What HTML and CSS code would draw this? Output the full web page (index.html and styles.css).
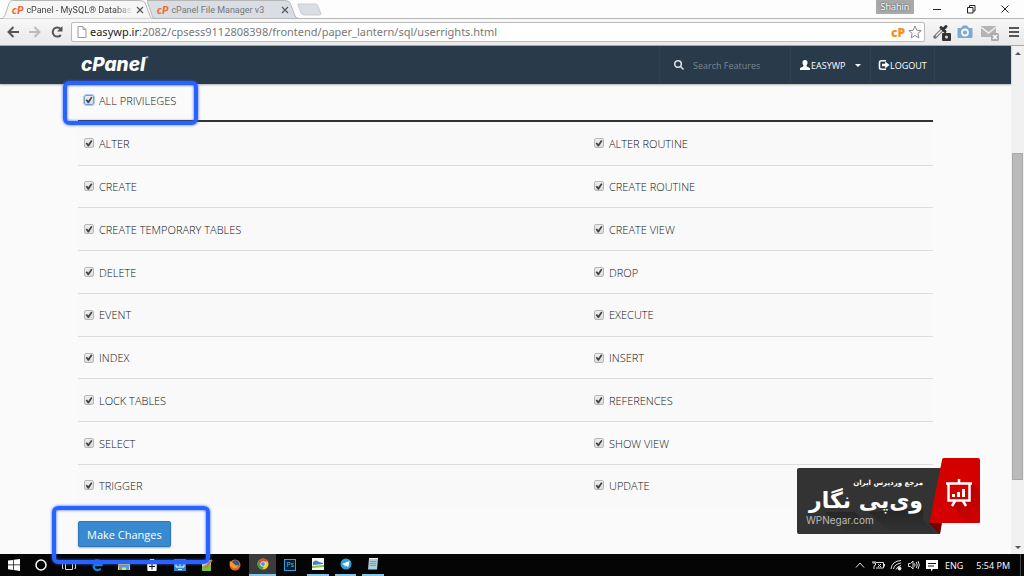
FILE: index.html
```html
<!DOCTYPE html>
<html lang="en">
<head>
  <meta charset="UTF-8">
  <title>cPanel - MySQL® Databases</title>
  <link rel="stylesheet" href="styles.css">
</head>
<body>
  <!-- browser tabs -->
  <div class="tab-strip">
    <div class="tab active">
      <svg class="tab-shape" viewBox="0 0 154 19" preserveAspectRatio="none"><path d="M0 18.5C4 18 6 2 9 1Q10 .5 12 .5H139Q144 .5 145 3L150 16Q151 18.5 154 18.5"/></svg>
      <span class="favicon">cP</span>
      <span class="tab-title">cPanel - MySQL® Databas</span>
      <button class="tab-close" aria-label="Close tab"><svg viewBox="0 0 8 8"><path d="M1 1L7 7M7 1L1 7"/></svg></button>
    </div>
    <div class="tab">
      <svg class="tab-shape" viewBox="0 0 154 19" preserveAspectRatio="none"><path d="M0 .5H139Q144 .5 145 3L150 16Q151 18.5 154 18.5H8Q6 18 5 15Z"/></svg>
      <span class="favicon">cP</span>
      <span class="tab-title">cPanel File Manager v3</span>
      <button class="tab-close" aria-label="Close tab"><svg viewBox="0 0 8 8"><path d="M1 1L7 7M7 1L1 7"/></svg></button>
    </div>
    <button class="new-tab" aria-label="New tab"><svg viewBox="0 0 25 13"><path d="M1 1H18Q20 1 21 3L24 11Q24 12 22 12H7Q5 12 4 10L1 2Z"/></svg></button>
    <div class="window-controls">
      <span class="profile">Shahin</span>
      <button aria-label="Minimize"><svg viewBox="0 0 10 10"><path d="M1 5.5H9"/></svg></button>
      <button aria-label="Restore"><svg viewBox="0 0 10 10"><path d="M1.500 3.500H7V9H1.500ZM3.500 3V1.500H9V7H7"/></svg></button>
      <button aria-label="Close"><svg viewBox="0 0 10 10"><path d="M1.500 1.500L8.500 8.500M8.500 1.500L1.500 8.500"/></svg></button>
    </div>
  </div>

  <div class="toolbar">
    <button aria-label="Back"><svg viewBox="0 0 14 14"><path class="stroke" d="M13 7H3M7.500 2L2.500 7L7.500 12"/></svg></button>
    <button class="disabled" aria-label="Forward"><svg viewBox="0 0 14 14"><path class="stroke" d="M1 7H11M6.500 2L11.500 7L6.500 12"/></svg></button>
    <button aria-label="Reload"><svg viewBox="0 0 14 14"><path class="stroke" d="M10.800 10A4.600 4.600 0 1 1 10.500 3.700"/><path class="fill" d="M12.500 1V6.500H7Z"/></svg></button>
    <div class="address">
      <svg class="page-icon" viewBox="0 0 10 12"><path d="M1 .5H6L9 3.500V11.500H1ZM6 .5V3.500H9"/></svg>
      <div class="url" role="textbox" aria-label="Address"><b>easywp.ir</b>:2082/cpsess9112808398/frontend/paper_lantern/sql/userrights.html</div>
      <span class="cp-key">cP</span>
      <svg class="star" viewBox="0 0 14 14"><path d="M7 1L8.800 5.200L13.200 5.600L9.900 8.500L10.900 12.900L7 10.500L3.100 12.900L4.100 8.500L.8 5.600L5.200 5.200Z"/></svg>
    </div>
    <div class="extensions">
      <button aria-label="Color picker"><svg viewBox="0 0 18 18"><path d="M2 14L9 7" stroke="#777" stroke-width="3.500" stroke-linecap="round"/><path d="M3 13L9 7" stroke="#eee" stroke-width="1.500"/><path d="M8 4.500L12 8.500M10 6.500L13 3.500" stroke="#333" stroke-width="3" stroke-linecap="round"/><rect x="9" y="10" width="9" height="8" rx="1" fill="#333"/><circle cx="13.500" cy="14" r="1.500" fill="#ddd"/></svg></button>
      <button aria-label="Screenshot"><svg viewBox="0 0 18 18"><path d="M2 5H5L7 2.500H11L13 5H16Q16.500 5 16.500 6V14Q16.500 15 15.500 15H2.500Q1.500 15 1.500 14V6Q1.500 5 2 5Z" fill="#7fa8cf"/><circle cx="9" cy="9.500" r="3" fill="none" stroke="#f2f6fa" stroke-width="1.800"/></svg></button>
      <button class="mail" aria-label="Mail"><svg viewBox="0 0 18 18"><rect x="0" y="3" width="15" height="11" fill="#b4b4b4"/><path d="M0 4L7.500 10L15 4" fill="none" stroke="#eee" stroke-width="1.500"/><rect x="10" y="10" width="8" height="8" rx="1.500" fill="#aaa"/><path d="M12 12L16 16M16 12L12 16" stroke="#fff" stroke-width="1.500"/></svg></button>
      <button class="menu" aria-label="Menu"><svg viewBox="0 0 18 18"><path d="M4 5H14M4 9H14M4 13H14" stroke="#555" stroke-width="2.200"/></svg></button>
    </div>
  </div>

  <div class="viewport">
    <div class="page">
      <header class="navbar">
        <a class="logo" href="#">cPanel<sup>®</sup></a>
        <nav>
          <label class="nav-item search">
            <svg viewBox="0 0 12 12"><circle cx="5" cy="5" r="3.300"/><path d="M7.500 7.500L10.500 10.500"/></svg>
            <input type="text" placeholder="Search Features" aria-label="Search Features">
          </label>
          <a class="nav-item user" href="#">
            <svg viewBox="0 0 12 12"><path d="M6 1C8 1 8.800 2.300 8.500 4.200C8.300 5.300 7.600 6 7.400 6.800C7.300 8 10 8.400 11 9.200V11H1V9.200C2 8.400 4.700 8 4.600 6.800C4.400 6 3.700 5.300 3.500 4.200C3.200 2.300 4 1 6 1Z"/></svg>
            EASYWP
            <span class="caret"></span>
          </a>
          <a class="nav-item logout" href="#">
            <svg viewBox="0 0 12 12"><path d="M8 1.800H3.500Q1.500 1.800 1.500 3.500V8.500Q1.500 10.200 3.500 10.200H8" fill="none" stroke="#fff" stroke-width="1.600"/><path d="M4 4.800H7.200V2.600L11.500 6L7.200 9.400V7.200H4Z"/></svg>
            LOGOUT
          </a>
        </nav>
      </header>

      <main>
        <table class="privileges">
          <thead>
            <tr><th colspan="2"><label class="all"><input type="checkbox" checked>ALL PRIVILEGES<span class="highlight"></span></label></th></tr>
          </thead>
          <tbody>
            <tr><td><label><input type="checkbox" checked>ALTER</label></td><td><label><input type="checkbox" checked>ALTER ROUTINE</label></td></tr>
            <tr><td><label><input type="checkbox" checked>CREATE</label></td><td><label><input type="checkbox" checked>CREATE ROUTINE</label></td></tr>
            <tr><td><label><input type="checkbox" checked>CREATE TEMPORARY TABLES</label></td><td><label><input type="checkbox" checked>CREATE VIEW</label></td></tr>
            <tr><td><label><input type="checkbox" checked>DELETE</label></td><td><label><input type="checkbox" checked>DROP</label></td></tr>
            <tr><td><label><input type="checkbox" checked>EVENT</label></td><td><label><input type="checkbox" checked>EXECUTE</label></td></tr>
            <tr><td><label><input type="checkbox" checked>INDEX</label></td><td><label><input type="checkbox" checked>INSERT</label></td></tr>
            <tr><td><label><input type="checkbox" checked>LOCK TABLES</label></td><td><label><input type="checkbox" checked>REFERENCES</label></td></tr>
            <tr><td><label><input type="checkbox" checked>SELECT</label></td><td><label><input type="checkbox" checked>SHOW VIEW</label></td></tr>
            <tr><td><label><input type="checkbox" checked>TRIGGER</label></td><td><label><input type="checkbox" checked>UPDATE</label></td></tr>
          </tbody>
        </table>
        <div class="actions">
          <button class="btn-primary">Make Changes</button>
          <span class="highlight"></span>
        </div>
      </main>

      <div class="watermark">
        <svg class="watermark-art" viewBox="0 0 184 76">
          <defs>
            <linearGradient id="shade" x1="0" y1="0" x2="1" y2="1"><stop offset="0" stop-color="#900"/><stop offset="1" stop-color="#d40000"/></linearGradient>
            <linearGradient id="dark" x1="0" y1="0" x2="0" y2="1"><stop offset="0" stop-color="#252525"/><stop offset="1" stop-color="#333"/></linearGradient>
          </defs>
          <path d="M2 10H146L143 76H2Q0 76 0 74V12Q0 10 2 10Z" fill="#333"/>
          <path d="M28 54L50 76H80L58 54ZM72 54L94 76H140L126 62V50Z" fill="url(#dark)"/>
          <path d="M132 65L143 76L145 65Z" fill="#7a0000"/>
          <path d="M147 0H181Q183 0 183 2V63Q183 65 181 65H135Q132 65 133 62L145 2Q145 0 147 0Z" fill="#d40000"/>
          <path d="M175 25L183 33V65H170L154 46L170 43Z" fill="url(#shade)" opacity=".7"/>
          <g fill="none" stroke="#fff" stroke-width="2.500"><path d="M149 25.500H175M151.500 26V42.500H172.500V26M162 21V25M158 43L155 48M166 43L169 48"/></g>
          <path d="M155 36H158V39H155ZM160 34H163V39H160ZM165 31H168V39H165Z" fill="#fff"/>
        </svg>
        <div class="watermark-text" lang="fa">
          <span class="tagline">مرجع وردپرس ایران</span>
          <span class="brand">وی‌پی نگار</span>
          <span class="site" lang="en">WPNegar.com</span>
        </div>
      </div>
    </div>

    <div class="scrollbar">
      <button class="up" aria-label="Scroll up"></button>
      <div class="track"><div class="thumb"></div></div>
      <button class="down" aria-label="Scroll down"></button>
    </div>
  </div>

  <footer class="taskbar">
    <div class="tasks">
      <button aria-label="Start"><svg viewBox="0 0 14 14"><path fill="#fff" d="M1 2.600L6 1.900V6.600H1ZM6.700 1.800L13 1V6.600H6.700ZM1 7.300H6V12L1 11.300ZM6.700 7.300H13V13L6.700 12.100Z"/></svg></button>
      <button aria-label="Cortana"><svg viewBox="0 0 14 14"><circle cx="7" cy="7" r="5" fill="none" stroke="#fff" stroke-width="1.500"/></svg></button>
      <button aria-label="Task view"><svg viewBox="0 0 14 14"><path fill="none" stroke="#ddd" d="M3.500 2.500H10.500V11.500H3.500ZM1.500 3.500H.5V10.500H1.500M12.500 3.500H13.500V10.500H12.500"/></svg></button>
      <button aria-label="Edge"><svg viewBox="0 0 14 14"><path fill="none" stroke="#1683e0" stroke-width="2.400" d="M3.500 7H11.500Q11.500 2.500 7.500 2.500Q3.500 2.500 2 6M11 11Q4 14 3.500 7.500"/></svg></button>
      <button aria-label="Explorer"><svg viewBox="0 0 14 14"><path fill="#f7d35f" d="M1 2H5L6 3H13V12H1Z"/><path fill="#45a6e3" d="M2 7H12V12H9V9.500H5V12H2Z"/></svg></button>
      <button aria-label="Store"><svg viewBox="0 0 14 14"><path fill="#fff" d="M2 4H12L11.500 13H2.500Z"/><path fill="none" stroke="#fff" d="M5 4V1.500H9V4"/><path stroke="#111" d="M4 8.500H10M7 6V11.500"/></svg></button>
      <button aria-label="Remote desktop"><svg viewBox="0 0 14 14"><path fill="#2f86cf" d="M1 1H13V13H1Z"/><path fill="none" stroke="#fff" d="M3 3.500H11V9H3ZM5 11.500H9M7 5V8"/></svg></button>
      <button aria-label="Editor"><svg viewBox="0 0 14 14"><path fill="#e9eee0" d="M2 2H11V13H2Z"/><path fill="#7fbd3b" d="M2 8L11 6V13H2Z"/><path stroke="#d9772b" stroke-width="2" d="M5 10L12 2"/></svg></button>
      <button aria-label="Firefox"><svg viewBox="0 0 14 14"><circle cx="7" cy="7" r="5.500" fill="#e6651c"/><circle cx="7.500" cy="5.800" r="3.500" fill="#2c5796"/><path fill="#f49b28" d="M1.800 3L5 5L8 7.500L10.500 7Q9 11 5 10Q1 8 1.800 3Z"/></svg></button>
      <button class="open current" aria-label="Chrome"><svg viewBox="0 0 14 14"><circle cx="7" cy="7" r="5.500" fill="#fbc916"/><path fill="#de4b3a" d="M2.200 4.300A5.500 5.500 0 0 1 11.900 4.500H7L4.500 8Z"/><path fill="#2da24f" d="M2.200 4.300L5 8.800L8 9L6.500 12.500A5.500 5.500 0 0 1 2.200 4.300Z"/><circle cx="7" cy="7" r="2.600" fill="#fff"/><circle cx="7" cy="7" r="2" fill="#4c8bf0"/></svg></button>
      <button aria-label="Photoshop"><span class="ps">Ps</span></button>
      <button class="open" aria-label="Image viewer"><svg viewBox="0 0 14 14"><path fill="#f5f8f1" d="M1 1H13V13H1Z"/><path fill="#3d83c2" d="M2 5Q5 2 8 5L12 6V7L2 8Z"/><path fill="#8abf45" d="M1 9L13 8V10L1 11Z"/></svg></button>
      <button class="open" aria-label="Telegram"><svg viewBox="0 0 14 14"><circle cx="7" cy="7" r="5.500" fill="#2ca0da"/><path fill="#fff" d="M3 7L10.500 4L9.300 10.200L7 8.600L5.800 9.800L5.500 8Z"/></svg></button>
      <button class="open" aria-label="Notepad"><svg viewBox="0 0 14 14"><path fill="#a9cfd9" d="M3 1.500H12L11 12.500H2Z"/><path stroke="#6f9ca8" d="M4 4.500H10.500M4 6.500H10M4 8.500H10"/><path stroke="#eee" d="M3 1.500H12"/></svg></button>
    </div>
    <div class="tray">
      <svg viewBox="0 0 14 14"><path d="M3 9.500L7 5L11 9.500"/></svg>
      <svg viewBox="0 0 14 14"><path d="M5 4.500H12.500V10H5M13.500 6V8.500M2 3V5M4 3V5M1.500 5H4.500V7L3 8V11M7 6L10 9M10 6L7 9"/></svg>
      <svg viewBox="0 0 14 14"><path d="M2 11Q3 3 12 2.500M4.500 11Q5.500 6 12 5M7 11.500Q8 8.500 12 7.500"/><circle cx="10.500" cy="10.500" r="1.500" fill="#fff"/></svg>
      <svg viewBox="0 0 14 14"><path d="M1.500 5.500H3.500L6 3V11L3.500 8.500H1.500ZM7.500 5.500Q8.500 7 7.500 8.500M9.300 4Q11.200 7 9.300 10M11 3Q13.700 7 11 11"/></svg>
      <svg viewBox="0 0 14 14"><path fill="#fff" stroke="none" d="M1 2H13V11H8L6 13.500V11H1Z"/><path stroke="#111" d="M3 5.500H11M3 8H9"/></svg>
      <span class="lang">ENG</span>
      <time class="clock">5:54 PM</time>
    </div>
  </footer>
</body>
</html>
```
FILE: styles.css
```css
* {
  box-sizing: border-box;
}

body {
  margin: 0;
  min-height: 100vh;
  display: flex;
  flex-direction: column;
  font-family: 'Open Sans', sans-serif;
  font-size: 10px;
  color: #111;
  background: #fafafa;
}

button {
  border: 0;
  padding: 0;
  background: none;
  font-family: inherit;
}

svg {
  display: block;
}

/* tabs */
.tab-strip {
  display: flex;
  height: 19px;
  padding-left: 2px;
  background: #fdfdfd;
  border-bottom: 1px solid #b5b5b5;
}

.tab {
  position: relative;
  display: flex;
  align-items: center;
  gap: 3px;
  width: 145px;
  height: 19px;
  padding: 0 3px 0 10px;
  font-family: Roboto, sans-serif;
  font-size: 9px;
  color: #777;
}

.tab.active {
  z-index: 1;
  color: #444;
}

.tab-shape {
  position: absolute;
  top: 0;
  left: 0;
  width: 152px;
  height: 19px;
  fill: #d9dde4;
  stroke: #b5b5b5;
}

.active .tab-shape {
  fill: #f6f6f6;
}

.tab > span,
.tab > button {
  position: relative;
}

.favicon {
  font: italic 900 11px Lato, sans-serif;
  color: #f5662c;
}

.tab-title {
  flex: 1;
  white-space: nowrap;
}

.active .tab-title {
  -webkit-mask-image: linear-gradient(to right, #000 85%, transparent);
  mask-image: linear-gradient(to right, #000 85%, transparent);
}

.tab-close svg {
  width: 8px;
  height: 8px;
  stroke: #555;
  stroke-width: 1.2;
}

.new-tab {
  align-self: flex-start;
  margin: 3px 0 0 5px;
}

.new-tab svg {
  width: 25px;
  height: 13px;
  fill: #d9dde4;
  stroke: #c8ccd2;
}

.window-controls {
  display: flex;
  align-items: center;
  margin-left: auto;
  padding-right: 2px;
}

.window-controls button {
  display: flex;
  justify-content: center;
  width: 34px;
}

.window-controls svg {
  width: 10px;
  height: 10px;
  fill: none;
  stroke: #222;
}

.profile {
  align-self: flex-start;
  width: 38px;
  height: 14px;
  margin-right: 6px;
  line-height: 13px;
  font-size: 9px;
  text-align: center;
  color: #fff;
  text-shadow: 0 0 2px #333;
  background: #a9a9a9;
}

/* address bar */
.toolbar {
  display: flex;
  align-items: center;
  height: 27px;
  padding: 0 1px 0 2px;
  background: linear-gradient(#f7f7f7, #e9e9e9);
  border-bottom: 1px solid #aaa;
}

.toolbar button {
  display: flex;
  justify-content: center;
  width: 22px;
}

.toolbar button svg {
  width: 14px;
  height: 14px;
}

.stroke {
  fill: none;
  stroke: #555;
  stroke-width: 2;
}

.fill {
  fill: #555;
}

.disabled .stroke {
  stroke: #bbb;
}

.address {
  flex: 1;
  display: flex;
  align-items: center;
  gap: 3px;
  height: 20px;
  margin-left: 3px;
  padding: 0 2px 0 5px;
  background: #fff;
  border: 1px solid #bbb;
  border-radius: 2px;
}

.page-icon {
  width: 10px;
  height: 12px;
  fill: #fff;
  stroke: #999;
}

.url {
  flex: 1;
  font-family: 'Noto Sans', sans-serif;
  font-size: 11px;
  line-height: 16px;
  color: #777;
}

.url b {
  font-weight: 400;
  color: #222;
}

.cp-key {
  font: 800 12px 'Open Sans', sans-serif;
  color: #f78f1e;
}

.star {
  width: 14px;
  height: 14px;
  fill: #fff;
  stroke: #888;
}

.extensions {
  display: flex;
  padding-left: 5px;
}

.extensions button {
  width: 23px;
}

.toolbar .extensions svg {
  width: 18px;
  height: 18px;
}

.toolbar .mail {
  width: 28px;
}

.toolbar .menu {
  width: 19px;
}

/* page */
.viewport {
  flex: 1;
  display: flex;
}

.page {
  position: relative;
  flex: 1;
}

.navbar {
  display: flex;
  align-items: stretch;
  justify-content: space-between;
  height: 38px;
  padding: 0 76px 0 81px;
  background: #293a4a;
  box-shadow: 0 1px 2px rgba(0,0,0,0.3);
}

.logo {
  align-self: center;
  font: italic 800 19px/34px Inter, sans-serif;
  color: #fff;
  text-decoration: none;
}

.logo sup {
  font-size: 4px;
  line-height: 0;
  vertical-align: 12px;
}

.navbar nav {
  display: flex;
  border-right: 1px solid #2f4254;
}

.nav-item {
  display: flex;
  align-items: center;
  border-left: 1px solid #2f4254;
  font-size: 9px;
  color: #fff;
  text-decoration: none;
}

.nav-item svg {
  width: 12px;
  height: 12px;
  fill: #fff;
}

.search {
  width: 131px;
  padding-left: 13px;
}

.search svg {
  fill: none;
  stroke: #ddd;
  stroke-width: 1.6;
}

.search input {
  width: 84px;
  margin-left: 8px;
  padding: 0;
  border: 0;
  background: none;
  font: inherit;
  color: #fff;
}

.search input::placeholder {
  color: #7b858e;
}

.user {
  width: 80px;
  padding-left: 8px;
}

.caret {
  margin-left: 10px;
  border: 3px solid transparent;
  border-top-color: #fff;
  border-bottom: 0;
}

.logout {
  width: 64px;
  padding-left: 7px;
}

main {
  padding: 0 78px;
}

.privileges {
  width: 100%;
  height: 422px;
  border-collapse: collapse;
  font-size: 11px;
  font-weight: 300;
}

.privileges th {
  height: 37px;
  padding: 0 6px 4px;
  border-bottom: 2px solid #333;
  font-weight: 300;
  text-align: left;
}

.privileges td {
  padding: 0 6px;
  border-top: 1px solid #ddd;
}

.privileges td:last-child {
  width: 345px;
}

.privileges tbody tr:first-child td {
  border-top: 0;
}

.privileges tbody tr:nth-child(odd) {
  background: #f9f9f9;
}

.privileges label {
  display: flex;
  align-items: center;
  gap: 5px;
  width: fit-content;
}

.privileges input {
  appearance: none;
  width: 10px;
  height: 10px;
  margin: 0;
  border: 1px solid #b8b8b8;
  border-radius: 2px;
  background: linear-gradient(#eee, #dcdcdc);
}

.privileges input:checked::after {
  content: '';
  display: block;
  height: 8px;
  background: #444;
  clip-path: polygon(8% 52%, 24% 40%, 42% 58%, 76% 10%, 94% 20%, 48% 90%, 36% 90%);
}

.privileges .all {
  position: relative;
}

.privileges .all input {
  border-color: #6d9fe0;
  outline: 1px solid #a9c8f3;
}

/* blue marker frames */
.highlight {
  position: absolute;
  z-index: 2;
  border: 4px solid #2a62ff;
  border-radius: 6px;
  box-shadow: 0 0 3px #2a62ff, inset 0 0 3px #2a62ff;
  pointer-events: none;
}

.all .highlight {
  inset: -12px -22px -17px -21px;
}

.actions {
  position: relative;
  display: inline-block;
  padding-top: 15px;
}

.actions .highlight {
  inset: 0 -39px -17px -26px;
}

.btn-primary {
  display: block;
  height: 26px;
  padding: 0 8px;
  border: 1px solid #2d78b8;
  border-radius: 2px;
  background: #3889cf;
  box-shadow: 0 1px 2px rgba(0,0,0,0.3);
  font-size: 11px;
  color: #fff;
}

/* site badge in the corner */
.watermark {
  position: absolute;
  right: 30px;
  bottom: 20px;
  width: 184px;
  height: 76px;
}

.watermark-art {
  position: absolute;
  inset: 0;
}

.watermark-text {
  position: relative;
  display: flex;
  flex-direction: column;
  width: 126px;
  padding: 18px 0 0 9px;
  color: #fff;
  direction: rtl;
  white-space: nowrap;
}

.tagline {
  font: bold 7px/14px 'DejaVu Sans', sans-serif;
}

.brand {
  font: bold 22px/22px 'DejaVu Sans', sans-serif;
}

.site {
  align-self: flex-end;
  font: 10px/16px Inter, sans-serif;
  color: #bbb;
}

.scrollbar {
  display: flex;
  flex-direction: column;
  width: 13px;
  background: #f1f1f1;
}

.scrollbar button {
  display: flex;
  align-items: center;
  justify-content: center;
  height: 14px;
}

.scrollbar button::before {
  content: '';
  border: 3px solid transparent;
}

.scrollbar .up::before {
  border-top: 0;
  border-bottom-color: #555;
}

.scrollbar .down::before {
  border-bottom: 0;
  border-top-color: #555;
}

.track {
  flex: 1;
  display: flex;
  flex-direction: column;
  padding: 0 1px;
}

.track::before {
  content: '';
  flex: 93;
}

.track::after {
  content: '';
  flex: 60;
}

.thumb {
  flex: 327;
  background: #bababa;
  border: 1px solid #a8a8a8;
}

/* taskbar */
.taskbar {
  display: flex;
  justify-content: space-between;
  height: 22px;
  background: #050505;
  color: #fff;
}

.tasks {
  display: grid;
  grid-template-columns: repeat(14, 1fr);
  width: 387px;
}

.tasks button {
  display: flex;
  align-items: center;
  justify-content: center;
}

.tasks svg,
.tray svg {
  width: 14px;
  height: 14px;
}

.tasks .open {
  margin: 0 3px;
  border-bottom: 2px solid #86c5ec;
}

.tasks .current {
  margin: 0;
  background: #3b3b3b;
}

.ps {
  width: 12px;
  height: 12px;
  border: 1px solid #2fa3dc;
  font-size: 7px;
  line-height: 10px;
  color: #4fc0f5;
  background: #06202c;
}

.tray {
  display: flex;
  align-items: center;
  gap: 4px;
  margin-right: 3px;
  padding-right: 10px;
  border-right: 1px solid #444;
  font-size: 9px;
}

.tray svg {
  fill: none;
  stroke: #ddd;
}

.lang {
  margin: 0 9px 0 2px;
}
```
